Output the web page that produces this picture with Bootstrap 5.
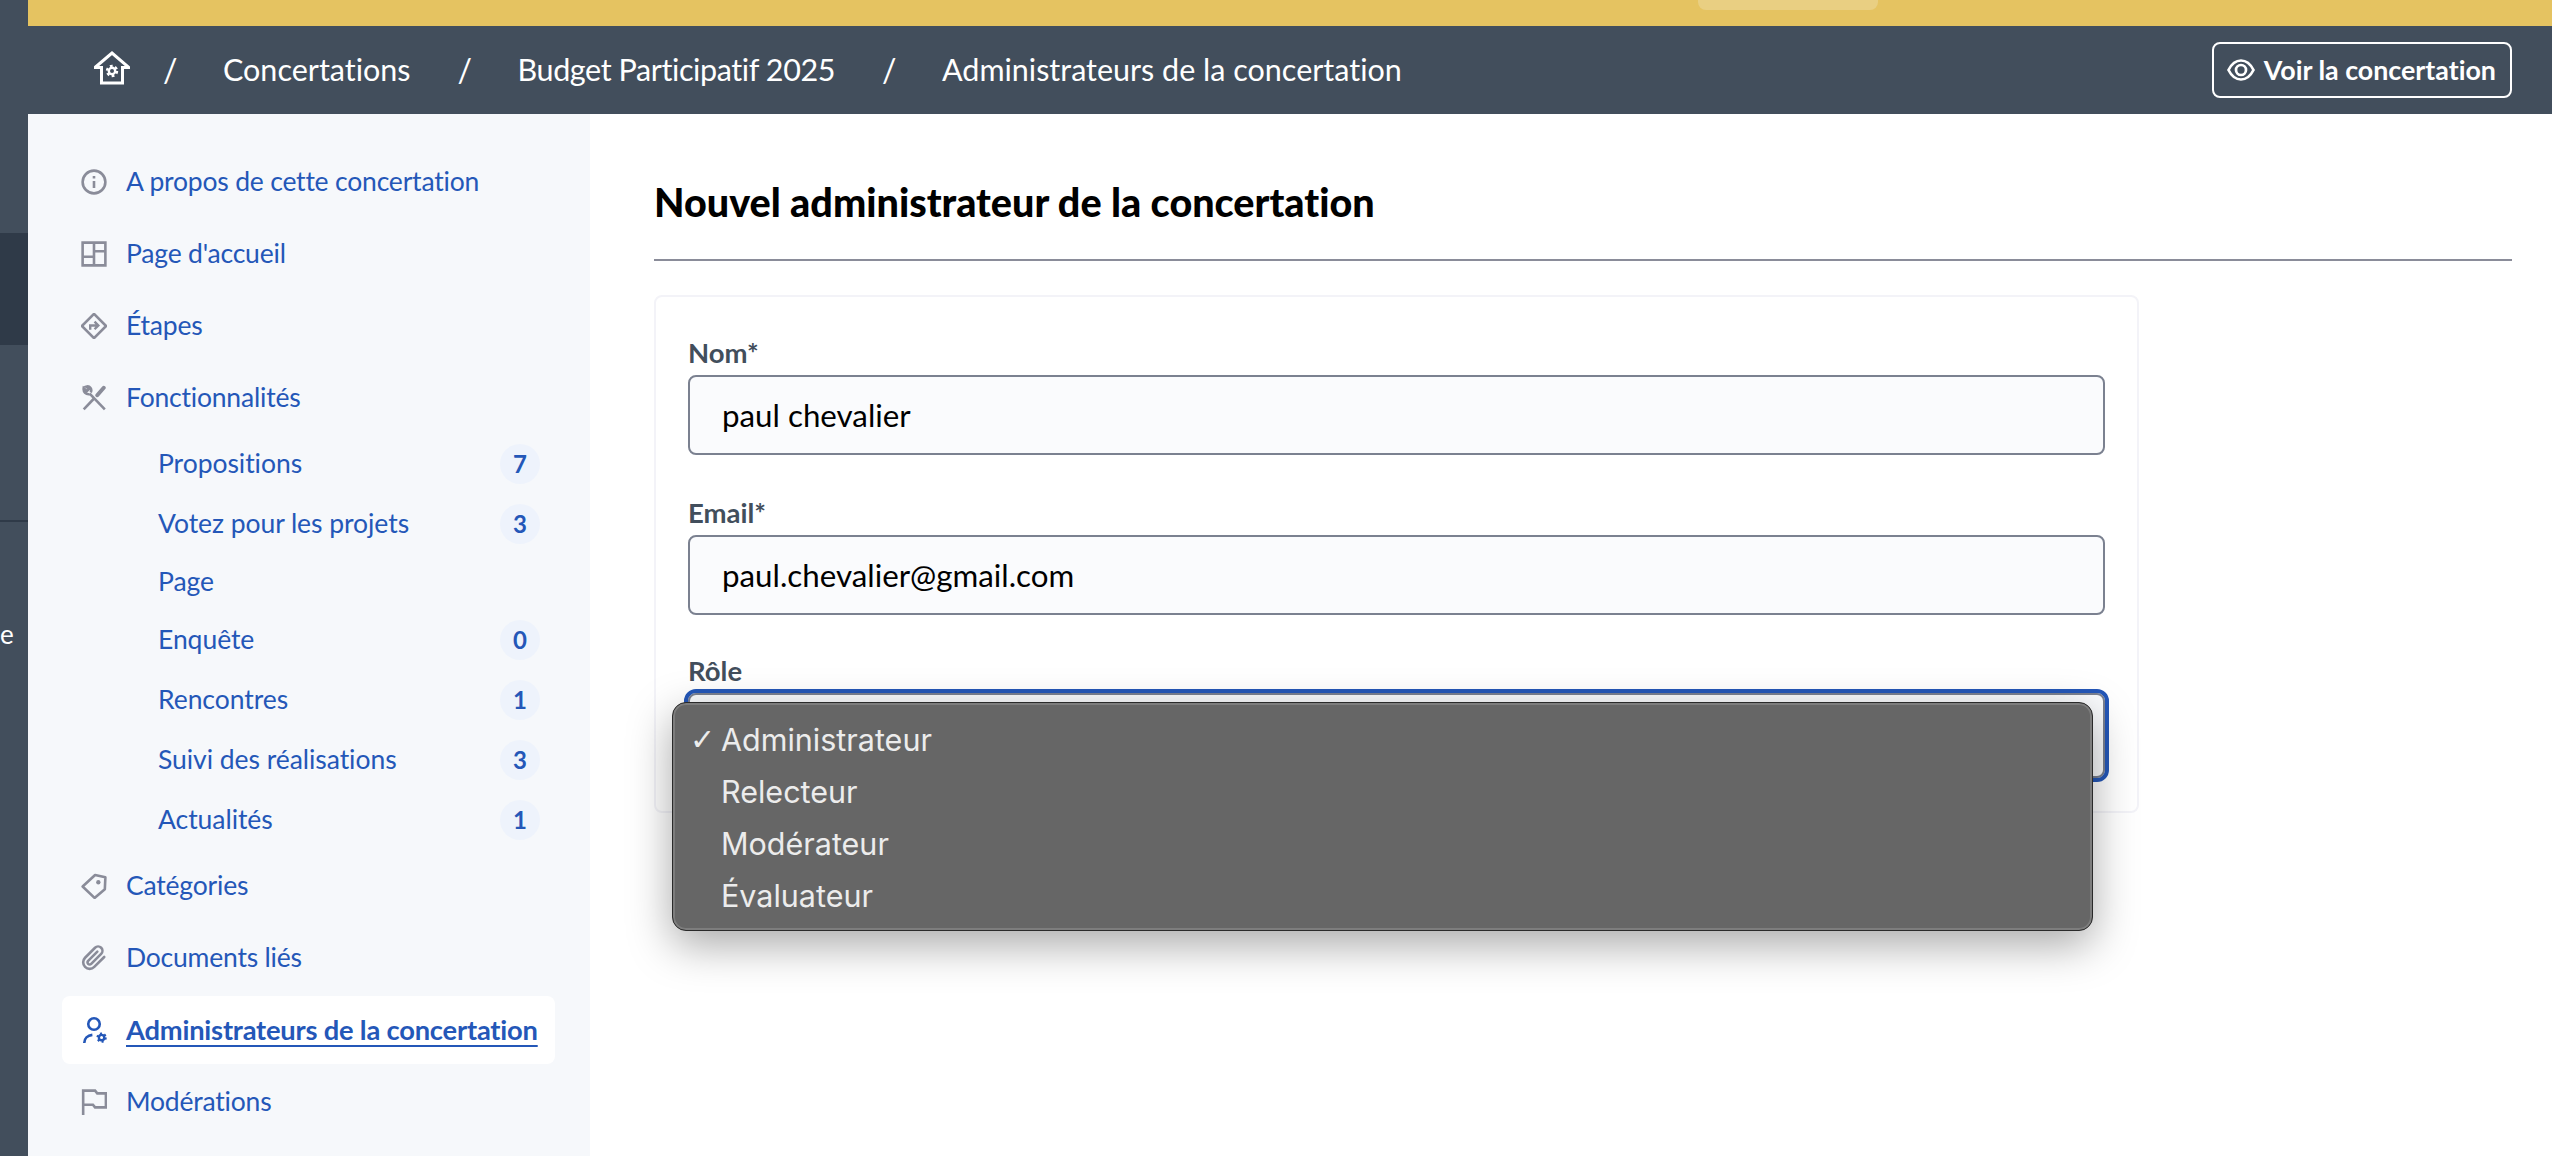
<!DOCTYPE html>
<html lang="fr">
<head>
<meta charset="utf-8">
<title>Nouvel administrateur</title>
<link href="https://cdn.jsdelivr.net/npm/bootstrap@5.3.0/dist/css/bootstrap.min.css" rel="stylesheet">
<style>
:root{--ink:#424e5c;--link:#2457b8;--grey:#8a8c99;}
html,body{height:100%;}
body{font-family:"Lato","Liberation Sans",sans-serif;font-variant-ligatures:none;background:#fff;overflow:hidden;color:#000;}
.shell{height:1156px;}
.strip{width:28px;background:var(--ink);color:#fff;font-size:26px;line-height:1;}
.strip-top{height:233px;}
.strip-band{height:112px;background:#2f3a48;}
.strip-gap{height:177px;border-bottom:2px solid #2f3a48;}
.strip-e{padding-top:99px;}
.topzone{height:26px;background:#e5c361;}
.topzone-chip{width:180px;height:10px;margin-left:1670px;background:#e9cf82;border-radius:0 0 8px 8px;}
.crumbbar{height:88px;background:var(--ink);color:#fff;padding:0 40px 0 66px;font-size:30.5px;}
.crumb-home{width:36px;height:34px;margin-bottom:5px;}
.crumb-sep{width:12px;margin:0 48px 0 47px;text-align:center;font-size:32px;}
.crumb-sep.first{margin:0 48px 0 33px;}
.crumb-tight{letter-spacing:-.4px;}
.viewbtn{height:56px;border:2px solid #fff;border-radius:8px;color:#fff;font-size:26.8px;font-weight:700;padding:0 14px 0 13px;gap:9px;}
.viewbtn:hover{color:#fff;}
.sidepanel{width:562px;background:#f6f8fb;padding:34px 35px 0 34px;font-size:26.5px;letter-spacing:-.2px;}
.sideitem{height:68px;margin-bottom:4px;padding-left:19px;gap:19px;color:var(--link);text-decoration:none;border-radius:8px;white-space:nowrap;}
.sideitem svg{width:26px;height:26px;flex:none;color:var(--grey);}
.sideitem.flush{margin-bottom:0;}
.sideitem.current{background:#fff;font-weight:700;font-size:27.3px;width:493px;}
.sideitem.current span{text-decoration:underline;text-underline-offset:5px;}
.sideitem.current svg{color:var(--link);}
.sublist{margin:2px 0 2px;padding:0 15px 0 96px;width:493px;letter-spacing:-.05px;}
.subitem{height:60px;color:var(--link);text-decoration:none;}
.subitem.plain{height:56px;}
.countpill{width:40px;height:40px;border-radius:50%;background:#eef3fc;color:var(--link);font-size:24px;font-weight:700;letter-spacing:0;}
.mainpane{padding:0 40px 0 64px;}
.pagehead{height:147px;border-bottom:2px solid var(--grey);padding-top:60px;font-size:39.5px;font-weight:900;line-height:56px;margin:0;}
.formbox{width:1485px;height:518px;margin-top:34px;border:2px solid #f3f3f8;border-radius:8px;padding:0 32px;}
.fieldlabel{display:block;margin:0 0 3px;font-size:27.5px;font-weight:700;color:var(--ink);line-height:38px;}
.fieldblock{margin-bottom:60px;}
.fieldblock.firstf{padding-top:37px;margin-bottom:39px;}
.fieldblock.secondf{margin-bottom:37px;}
.fieldinput{height:80px;border:2px solid #7b8190;border-radius:8px;background:#fafbfd;font-size:31.3px;padding:0 32px;color:#000;}
.fieldinput:focus{background:#fafbfd;border-color:#7b8190;box-shadow:none;}
.roleselect{height:85px;margin-top:2px;background-image:none;outline:4px solid var(--link);outline-offset:0;}
.rolefield{position:relative;}
.rolemenu{display:block;position:absolute;left:-16px;top:9px;width:1421px;height:229px;margin:0;padding:11px 0;background:#666;border:1px solid #2a2a2a;border-radius:14px;box-shadow:inset 0 0 0 2px #7d7d7d,0 14px 44px rgba(0,0,0,.34);font-family:"Inter","Liberation Sans",sans-serif;font-size:30.5px;letter-spacing:0;color:#ececec;list-style:none;}
.roleopt{height:52px;padding-left:48px;position:relative;}
.rolecheck{position:absolute;left:17px;top:3px;font-family:"DejaVu Sans",sans-serif;font-size:30px;}
</style>
</head>
<body>
<div class="shell d-flex">
  <div class="strip flex-shrink-0">
    <div class="strip-top"></div><div class="strip-band"></div><div class="strip-gap"></div><div class="strip-e">e</div>
  </div>
  <div class="flex-grow-1 d-flex flex-column min-w-0">
    <div class="topzone"><div class="topzone-chip"></div></div>
    <nav class="crumbbar d-flex align-items-center">
      <svg class="crumb-home" viewBox="0 0 36 34" fill="none" stroke="#fff" stroke-width="3"><path d="M1 16.500 18 2 35 16.500H28.500V32H7.500V16.500z" stroke-linejoin="miter"/><circle cx="18" cy="20" r="4.600" stroke-width="3.200" stroke-dasharray="2.500 2.300"/><circle cx="18" cy="20" r="3.200" stroke-width="2.400"/></svg>
      <span class="crumb-sep first">/</span><span>Concertations</span>
      <span class="crumb-sep">/</span><span class="crumb-tight">Budget Participatif 2025</span>
      <span class="crumb-sep">/</span><span>Administrateurs de la concertation</span>
      <a href="#" class="viewbtn ms-auto d-flex align-items-center text-decoration-none">
        <svg width="28" height="22" viewBox="0 0 28 22" fill="none" stroke="#fff" stroke-width="2.700"><path d="M1.500 11C5 4 9 1.500 14 1.500S23 4 26.500 11C23 18 19 20.500 14 20.500S5 18 1.500 11z"/><circle cx="14" cy="11" r="5"/></svg>
        <span>Voir la concertation</span>
      </a>
    </nav>
    <div class="d-flex flex-grow-1">
      <aside class="sidepanel flex-shrink-0">
        <a href="#" class="sideitem d-flex align-items-center"><svg viewBox="0 0 24 24" fill="none" stroke="currentColor" stroke-width="2.400"><circle cx="12" cy="12" r="10.500"/><path d="M12 11v6.500M12 6.500v2.200"/></svg><span>A propos de cette concertation</span></a>
        <a href="#" class="sideitem d-flex align-items-center"><svg viewBox="0 0 24 24" fill="none" stroke="currentColor" stroke-width="2.400"><path d="M1.500 1.500h21v21h-21zM12 1.500v21M1.500 14.500H12M12 9.500h10.500"/></svg><span>Page d'accueil</span></a>
        <a href="#" class="sideitem d-flex align-items-center"><svg viewBox="0 0 24 24" fill="none" stroke="currentColor" stroke-width="2.400"><path d="M12 .8 23.200 12 12 23.200 .8 12z" stroke-linejoin="round"/><path d="M8.500 15.500V11.500H15M12.500 8 16 11.500 12.500 15" stroke-width="2.200"/></svg><span>Étapes</span></a>
        <a href="#" class="sideitem flush d-flex align-items-center"><svg viewBox="0 0 24 24" fill="none" stroke="currentColor" stroke-width="2.400"><path d="M2.500 22.500 12.500 12" /><path d="M15 9.500 21 2.500" stroke-width="3.600" stroke-linecap="round"/><path d="M8 8 22 22.500" /><path d="M8 8.500C4.500 9 2 6.500 2.500 3L5.500 5.500 7.500 3.500 4.800 1.500C8 .5 10.500 3.500 9 7"/></svg><span>Fonctionnalités</span></a>
        <div class="sublist">
          <a href="#" class="subitem d-flex align-items-center justify-content-between"><span>Propositions</span><span class="countpill d-flex align-items-center justify-content-center">7</span></a>
          <a href="#" class="subitem d-flex align-items-center justify-content-between"><span>Votez pour les projets</span><span class="countpill d-flex align-items-center justify-content-center">3</span></a>
          <a href="#" class="subitem plain d-flex align-items-center"><span>Page</span></a>
          <a href="#" class="subitem d-flex align-items-center justify-content-between"><span>Enquête</span><span class="countpill d-flex align-items-center justify-content-center">0</span></a>
          <a href="#" class="subitem d-flex align-items-center justify-content-between"><span>Rencontres</span><span class="countpill d-flex align-items-center justify-content-center">1</span></a>
          <a href="#" class="subitem d-flex align-items-center justify-content-between"><span>Suivi des réalisations</span><span class="countpill d-flex align-items-center justify-content-center">3</span></a>
          <a href="#" class="subitem d-flex align-items-center justify-content-between"><span>Actualités</span><span class="countpill d-flex align-items-center justify-content-center">1</span></a>
        </div>
        <a href="#" class="sideitem d-flex align-items-center"><svg viewBox="0 0 24 24" fill="none" stroke="currentColor" stroke-width="2.400"><path d="M1.500 12.500 13 1.800 22.500 4 22 15 12.500 23z" stroke-linejoin="round"/><circle cx="16" cy="8.500" r="2" fill="currentColor" stroke="none"/></svg><span>Catégories</span></a>
        <a href="#" class="sideitem d-flex align-items-center"><svg viewBox="0 0 24 24" fill="none" stroke="currentColor" stroke-width="2.400" stroke-linecap="round"><path d="M21.440 11.050l-9.190 9.190a6 6 0 0 1-8.490-8.490l9.190-9.190a4 4 0 0 1 5.660 5.660l-9.200 9.190a2 2 0 0 1-2.830-2.830l8.490-8.480"/></svg><span>Documents liés</span></a>
        <a href="#" class="sideitem current d-flex align-items-center"><svg viewBox="0 0 24 24" fill="none" stroke="currentColor" stroke-width="2.400"><circle cx="12" cy="6.500" r="5.300"/><path d="M3 24c0-4 3-7 7.500-7.500"/><circle cx="19" cy="19" r="3.800" stroke-width="2" stroke-dasharray="1.800 2.200"/><circle cx="19" cy="19" r="2.500" stroke-width="2.200"/></svg><span>Administrateurs de la concertation</span></a>
        <a href="#" class="sideitem d-flex align-items-center"><svg viewBox="0 0 24 24" fill="none" stroke="currentColor" stroke-width="2.400"><path d="M2 24.500V1.500H13L15 4H23V17H13L11 14.500H2"/></svg><span>Modérations</span></a>
      </aside>
      <main class="mainpane flex-grow-1">
        <h1 class="pagehead">Nouvel administrateur de la concertation</h1>
        <form class="formbox">
          <div class="fieldblock firstf"><label class="fieldlabel" for="fnom">Nom*</label><input id="fnom" class="form-control fieldinput" value="paul chevalier"></div>
          <div class="fieldblock secondf"><label class="fieldlabel" for="fmail">Email*</label><input id="fmail" class="form-control fieldinput" value="paul.chevalier@gmail.com"></div>
          <div class="rolefield"><label class="fieldlabel" for="frole">Rôle</label>
            <div class="rolefield">
              <select id="frole" class="form-select fieldinput roleselect"><option></option></select>
              <ul class="rolemenu">
                <li class="roleopt d-flex align-items-center"><span class="rolecheck">✓</span>Administrateur</li>
                <li class="roleopt d-flex align-items-center">Relecteur</li>
                <li class="roleopt d-flex align-items-center">Modérateur</li>
                <li class="roleopt d-flex align-items-center">Évaluateur</li>
              </ul>
            </div>
          </div>
        </form>
      </main>
    </div>
  </div>
</div>
<script src="https://cdn.jsdelivr.net/npm/bootstrap@5.3.0/dist/js/bootstrap.bundle.min.js"></script>
</body>
</html>
